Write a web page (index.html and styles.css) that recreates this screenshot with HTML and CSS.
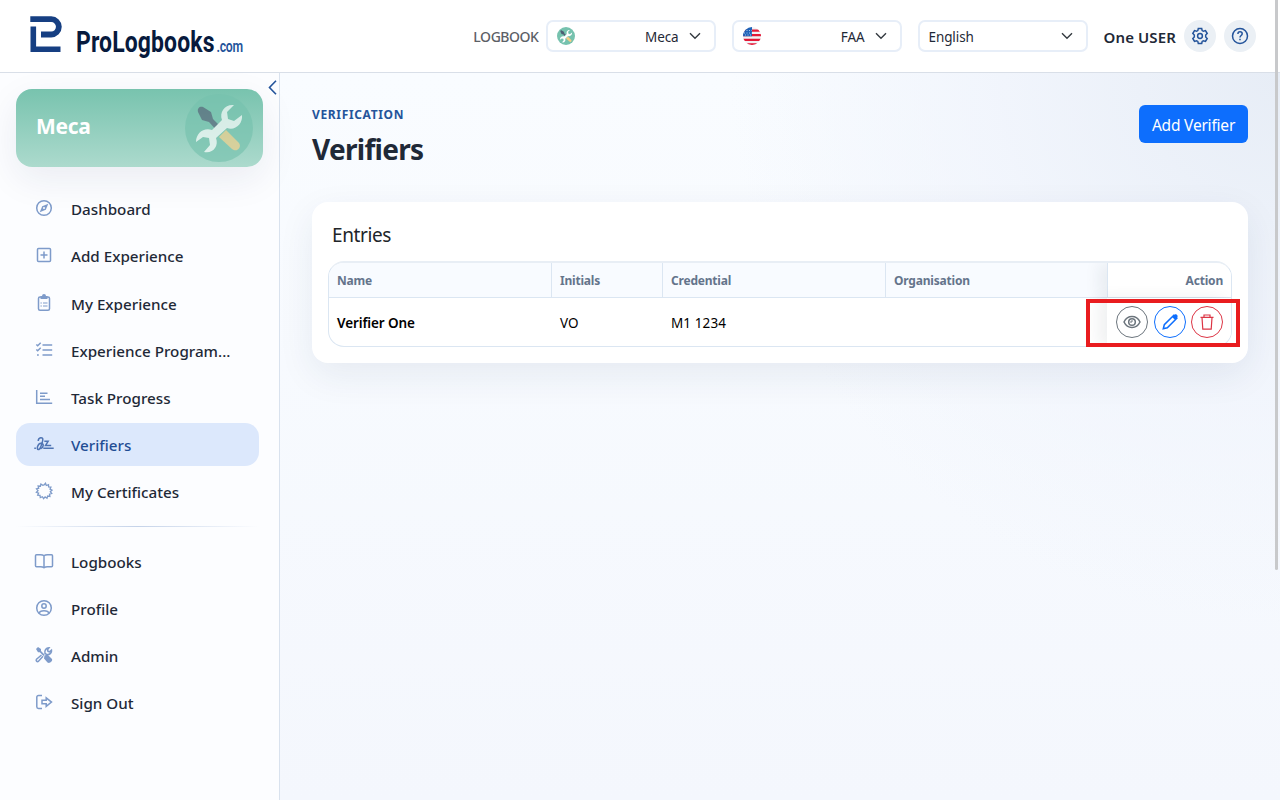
FILE: index.html
```html
<!DOCTYPE html>
<html lang="en">
<head>
  <meta charset="UTF-8" />
  <meta name="viewport" content="width=device-width, initial-scale=1.0" />
  <title>Verifiers - ProLogbooks.com</title>
  <link rel="stylesheet" href="styles.css">
</head>
<body>
  <svg width="0" height="0" class="defs">
    <symbol id="chevron" viewBox="0 0 12 8"><path d="M1 1.2 6 6.2 11 1.2" /></symbol>
    <symbol id="tools-color" viewBox="0 0 68 68">
      <circle cx="34" cy="34" r="34" fill="#76c2ae" />
      <path d="M13 18c-1-4 2-6 5-5l8 5 2 7 9 9-4 4-9-10-7-2z" fill="#4f5d73" />
      <path d="m34 43 7-7 13 13c3 4-2 10-7 6z" fill="#f5cf87" />
      <path d="M49 11c-9-1-15 7-12 15L27 36c-8-3-16 3-16 12l7-5 6 1 1 7-6 7c9 2 15-6 12-14l11-10c8 3 16-4 15-13l-8 6-6-2-1-7z" fill="#fff" />
    </symbol>
  </svg>

  <header class="topbar">
    <svg class="logo" width="216" height="46" viewBox="0 0 216 46">
      <path d="M0.3 4.2H21.2a7.6 7.6 0 0 1 0 15.3H11" fill="none" stroke="#163f82" stroke-width="5.8" />
      <path d="M3.3 11.500V34.300H30.5" fill="none" stroke="#163f82" stroke-width="5.6" />
      <text class="logo-name" transform="translate(46 36.500) scale(.765 1)" textLength="181">ProLogbooks</text>
      <text class="logo-com" transform="translate(186.500 36.500) scale(.72 1)" textLength="37">.com</text>
    </svg>
    <div class="controls">
      <span class="control-label">LOGBOOK</span>
      <div class="select">
        <svg class="select-icon" width="18" height="18"><use href="#tools-color" /></svg>
        <span class="select-value right">Meca</span>
        <svg class="chevron" width="12" height="8"><use href="#chevron" /></svg>
      </div>
      <div class="select">
        <svg class="select-icon" width="18" height="18" viewBox="0 0 18 18">
          <clipPath id="flag"><circle cx="9" cy="9" r="9" /></clipPath>
          <g clip-path="url(#flag)">
            <path fill="#f1f2f5" d="M0 0h18v18H0z" />
            <path fill="#e31837" d="M0 2.5h18v2.3H0zM0 7h18v2.3H0zM0 11.7h18V14H0zM0 16.3h18V18H0z" />
            <path fill="#1f62b8" d="M0 0h9v9.3H0z" />
            <path stroke="#a9c7ea" stroke-dasharray="1 1.5" d="M1 3.5h8M1 6h8M2 8h7" />
          </g>
        </svg>
        <span class="select-value right">FAA</span>
        <svg class="chevron" width="12" height="8"><use href="#chevron" /></svg>
      </div>
      <div class="select">
        <span class="select-value">English</span>
        <svg class="chevron" width="12" height="8"><use href="#chevron" /></svg>
      </div>
      <span class="user">One USER</span>
      <span class="round">
        <svg class="icon" width="18" height="18" viewBox="0 0 18 18"><path d="M7.3 1.5h3.4l.5 2.1 1.2.7 2.1-.7 1.7 2.9L14.7 8v2l1.5 1.5-1.7 2.9-2.1-.7-1.2.7-.5 2.1H7.3l-.5-2.1-1.2-.7-2.1.7-1.7-2.9L3.3 10V8L1.8 6.5l1.7-2.9 2.1.7 1.2-.7z" /><circle cx="9" cy="9" r="2.4" /></svg>
      </span>
      <span class="round">
        <svg class="icon" width="18" height="18" viewBox="0 0 18 18"><circle cx="9" cy="9" r="7.5" /><path d="M6.9 7c0-3 4.3-2.8 4.3-.2C11.2 8.500 9 8.500 9 10.400M9 11.700v1.500" /></svg>
      </span>
    </div>
  </header>

  <div class="layout">
    <aside class="sidebar">
      <svg class="collapse" width="9" height="15" viewBox="0 0 9 15"><path d="M8 .8 1.500 7.500 8 14.200" /></svg>
      <div class="logbook-card">
        <span>Meca</span>
        <svg width="68" height="68"><use href="#tools-color" /></svg>
      </div>
      <nav class="menu">
        <a class="item"><svg class="icon" width="20" height="20" viewBox="0 0 20 20"><circle cx="10" cy="10" r="7.300" /><path class="solid" d="M14.300 5.700 11.800 11.800 5.700 14.300 8.200 8.200z" /><circle class="hole" cx="10" cy="10" r="1" /></svg>Dashboard</a>
        <a class="item"><svg class="icon" width="20" height="20" viewBox="0 0 20 20"><rect x="3.500" y="3.500" width="13" height="13" rx="1" /><path d="M10 6.500v7M6.500 10h7" /></svg>Add Experience</a>
        <a class="item"><svg class="icon" width="20" height="20" viewBox="0 0 20 20"><rect x="4.500" y="4" width="11" height="13.300" rx="1.500" /><path class="solid" d="M6.500 3H8a2 2 0 0 1 4 0h1.500v3h-7z" /><path d="M6.500 10h1.300M9 10h4.500M6.500 13h1.300M9 13h4.500" stroke-width="1.200" /></svg>My Experience</a>
        <a class="item"><svg class="icon" width="20" height="20" viewBox="0 0 20 20"><path d="M8.500 5h9.700M8.500 10h9.700M8.500 15h9.700M3 15h1.800M2.300 4.500l1.400 1.300 3-3M2.300 9.500l1.400 1.300 3-3" /></svg>Experience Program...</a>
        <a class="item"><svg class="icon" width="20" height="20" viewBox="0 0 20 20"><path d="M2.700 3v13.300h15.500M6 6.200h7.500M6 9.300h5M6 12.500h10" /></svg>Task Progress</a>
        <a class="item active"><svg class="icon" width="20" height="20" viewBox="0 0 20 20"><path d="M.3 14.300h1.600M4.200 7C4.300 3 9.300 2.500 8.800 6 8.300 9.500 6 15.800 4.300 15.600 2.300 15.300 3.500 9.700 7 9.300c3.500-.3 2.500 4.500-.5 5.500M9.300 14.300h10.400M10.300 7.300h3.800l-2.600 4.200h5.700" /></svg>Verifiers</a>
        <a class="item"><svg class="icon" width="20" height="20" viewBox="0 0 20 20"><path d="M10 4 11.500 2.300 12.300 4.500 14.500 3.700 14.600 6 16.900 6.100 16 8.200 18 9.200 16.300 10.700 17.700 12.500 15.500 13.100 15.900 15.400 13.700 15 13 17.200 11.100 15.900 9.600 17.600 8.400 15.700 6.300 16.600 6 14.300 3.700 14.200 4.600 12.100 2.400 11.300 4 9.700 2.500 7.900 4.700 7.200 4.100 5 6.400 5.200 6.900 3 8.800 4.300z" stroke-width="1.300" /></svg>My Certificates</a>
      </nav>
      <div class="divider"></div>
      <nav class="menu">
        <a class="item"><svg class="icon" width="20" height="20" viewBox="0 0 20 20"><path d="M10 4.800C9 3.800 7.500 3.700 6.500 3.700h-4c-.7 0-1 .3-1 1v10c0 .7.300 1 1 1h4c1.500 0 2.500.2 3.500 1 1-.8 2-1 3.500-1h4c.7 0 1-.3 1-1v-10c0-.7-.3-1-1-1h-4c-1 0-2.500.1-3.500 1.100zv12" /></svg>Logbooks</a>
        <a class="item"><svg class="icon" width="20" height="20" viewBox="0 0 20 20"><circle cx="10" cy="10" r="7.300" /><circle cx="10" cy="8" r="2.200" /><path d="M5 15.200c1-3.400 9-3.400 10 0" /></svg>Profile</a>
        <a class="item"><svg class="icon" width="20" height="20" viewBox="0 0 20 20"><path class="solid" d="M2 4 4 2l3 2v2l3.700 3.700-1.200 1.200L5.800 7.200H4zM10.500 10.500l3-1 4.500 4.500c1 2-2.300 5-4.500 3.500L10 13.500z" /><path d="m9 11.300-4.500 5c-1.500 1-3-.8-2-2l5-4.300M11 8.500c-.7-3.200 1-5.700 4-5.700l-1.500 2 .5 1.500 1.500.5 2-1.600c.5 2.500-1.500 4.500-4.500 4.500z" /></svg>Admin</a>
        <a class="item"><svg class="icon" width="20" height="20" viewBox="0 0 20 20"><path d="M8 3.500H4.500c-1 0-1.700.7-1.700 1.700v9.600c0 1 .7 1.700 1.700 1.700H8M8 8.300h4.200V5.800l5.300 4.300-5.300 4.300v-2.600H8z" /></svg>Sign Out</a>
      </nav>
    </aside>

    <main class="content">
      <div class="page-head">
        <div>
          <div class="eyebrow">VERIFICATION</div>
          <h1>Verifiers</h1>
        </div>
        <button type="button">Add Verifier</button>
      </div>

      <section class="card">
        <h2>Entries</h2>
        <div class="table">
          <div class="tr th">
            <span>Name</span>
            <span>Initials</span>
            <span>Credential</span>
            <span>Organisation</span>
            <span class="sticky">Action</span>
          </div>
          <div class="tr td">
            <span class="name">Verifier One</span>
            <span>VO</span>
            <span>M1 1234</span>
            <span></span>
            <span class="sticky">
              <a class="action view"><svg class="icon" width="18" height="18" viewBox="0 0 18 18"><path d="M1 9c3.500-7.300 12.500-7.300 16 0-3.500 7.300-12.500 7.300-16 0z" /><circle cx="9" cy="9" r="3.300" /><path d="M9 7V9H7" stroke-width="1" /></svg></a>
              <a class="action edit"><svg class="icon" width="18" height="18" viewBox="0 0 18 18"><path d="m2.300 15.700 1-4L12.800 2.200l3 3-9.500 9.500z" /><path class="solid" d="m11 4 2.400-2.300c2-1.300 4 .9 2.900 2.700L14 6.800z" /></svg></a>
              <a class="action delete"><svg class="icon" width="18" height="18" viewBox="0 0 18 18"><path d="M2.500 4.300h13M6 4V2h6v2M4 4.500l.8 11.700h8.400L14 4.500" /></svg></a>
            </span>
          </div>
        </div>
        <div class="highlight"></div>
      </section>
    </main>
  </div>
  <div class="scroll-thumb"></div>
</body>
</html>
```
FILE: styles.css
```css
* {
  box-sizing: border-box;
}
body {
  margin: 0;
  height: 800px;
  overflow: hidden;
  font-family: "Noto Sans", "Open Sans", sans-serif;
  font-size: 16px;
  color: #1f2937;
  background: #fff;
}
.defs {
  position: absolute;
}
.topbar {
  height: 73px;
  border-bottom: 1px solid #d9dfe8;
  display: flex;
  justify-content: space-between;
  padding: 0 24px 0 30px;
}
.logo {
  margin-top: 15px;
  overflow: visible;
}
.logo-name, .logo-com {
  font-family: Roboto, sans-serif;
  font-weight: bold;
  font-size: 30px;
  fill: #071a3d;
}
.logo-com {
  font-size: 17px;
  font-weight: 600;
  fill: #24549b;
}
.controls {
  display: flex;
  align-items: center;
  height: 72px;
}
.control-label {
  font-size: 14px;
  font-weight: 500;
  color: #5c6066;
  letter-spacing: -0.45px;
  padding-top: 1px;
  margin-right: 7px;
}
.select {
  width: 170px;
  height: 32px;
  border: 2px solid #e7eef8;
  border-radius: 7px;
  display: flex;
  align-items: center;
  padding: 0 13px 0 9px;
  margin-right: 16px;
}
.select-value {
  flex: 1;
  font-size: 13.5px;
  letter-spacing: -0.1px;
  padding-top: 1px;
}
.right {
  text-align: right;
}
.chevron {
  margin-left: 10px;
  fill: none;
  stroke: #343a40;
  stroke-width: 1.4;
}
.user {
  font-size: 15px;
  font-weight: 600;
  letter-spacing: 0.12px;
  margin-right: 8px;
  padding-top: 2px;
}
.round {
  width: 32px;
  height: 32px;
  border-radius: 50%;
  background: #ebf0f5;
  color: #24549b;
  display: flex;
  align-items: center;
  justify-content: center;
}
.round + .round {
  margin-left: 8px;
}
.icon {
  fill: none;
  stroke: currentColor;
  stroke-width: 1.5;
  flex: none;
}
.icon .solid {
  fill: currentColor;
  stroke: none;
}
.icon .hole {
  fill: #fff;
  stroke: none;
}
.layout {
  display: flex;
  height: 727px;
}
.sidebar {
  position: relative;
  width: 280px;
  border-right: 1px solid #d9e2ee;
  background: #fcfdff;
  padding: 16px;
}
.collapse {
  position: absolute;
  top: 7px;
  right: 2px;
  fill: none;
  stroke: #24549b;
  stroke-width: 1.6;
}
.logbook-card {
  height: 78px;
  border-radius: 16px;
  background: linear-gradient(#78c3ae, #acdacd);
  box-shadow: 0 12px 36px rgba(31, 41, 85, 0.08);
  display: flex;
  align-items: center;
  justify-content: space-between;
  padding: 0 10px 0 20px;
  color: #fff;
  font-size: 21px;
  font-weight: bold;
  letter-spacing: -0.3px;
}
.logbook-card span {
  padding-bottom: 4px;
}
.logbook-card svg {
  opacity: 0.65;
}
.menu {
  display: flex;
  flex-direction: column;
  gap: 4px;
  margin: 20px 4px 0 0;
}
.item {
  display: flex;
  align-items: center;
  gap: 17px;
  height: 43.2px;
  padding: 1.4px 0 0 18px;
  border-radius: 14px;
  font-size: 15.2px;
  font-weight: 550;
  letter-spacing: 0;
  white-space: nowrap;
}
.item .icon {
  color: #7e9bca;
  margin-top: -2px;
}
.item.active {
  background: #dce8fc;
  color: #1f4d94;
}
.item.active .icon {
  color: #4f74b3;
}
.divider {
  height: 1px;
  margin: 13px 4px -8px 0;
  background: linear-gradient(90deg, transparent, #c5d3e9, transparent);
}
.content {
  flex: 1;
  padding: 32px;
  background: radial-gradient(circle at 100% 0, #e7edf6 0, rgba(240, 244, 252, 0.8) 300px, transparent 550px), linear-gradient(#f9fcff, #f4f7fd);
}
.page-head {
  display: flex;
  justify-content: space-between;
  align-items: flex-start;
  height: 97px;
}
.eyebrow {
  font-size: 12px;
  line-height: 20px;
  font-weight: bold;
  letter-spacing: 0.65px;
  color: #24549b;
}
h1 {
  margin: 4px 0 0;
  font-size: 28px;
  line-height: 40px;
  letter-spacing: -0.7px;
}
button {
  height: 38px;
  width: 109px;
  padding: 2px 0 0;
  border: none;
  border-radius: 6px;
  background: #0d6efd;
  color: #fff;
  font-family: inherit;
  font-size: 15.5px;
  letter-spacing: -0.2px;
}
.card {
  position: relative;
  height: 161px;
  padding: 20px 16px 16px;
  border-radius: 16px;
  background: #fff;
  box-shadow: 0 12px 36px rgba(31, 50, 85, 0.08);
}
h2 {
  margin: 0 4px 13px;
  font-size: 19px;
  line-height: 26px;
  font-weight: normal;
  letter-spacing: -0.4px;
  color: #212529;
}
.table {
  height: 86px;
  border: 1px solid #dbe6f2;
  border-top: 2px solid #e8eef5;
  border-radius: 16px;
  overflow: hidden;
}
.tr {
  display: grid;
  grid-template-columns: 222px 111px 223px 222px 1fr;
}
.tr > span {
  display: flex;
  align-items: center;
  padding: 1px 8px 0;
}
.th {
  height: 35px;
  background: #f8fbff;
  border-bottom: 1px solid #dbe6f2;
  font-size: 12px;
  font-weight: bold;
  letter-spacing: -0.2px;
  color: #64748b;
}
.th > span:not(:first-child) {
  border-left: 1px solid #dbe6f2;
}
.td {
  height: 49px;
  font-size: 13.5px;
  color: #000;
}
.td > span:not(:first-child) {
  padding-left: 9px;
  letter-spacing: 0.1px;
}
.name {
  font-weight: 600;
  letter-spacing: -0.1px;
}
.tr > .sticky {
  justify-content: flex-end;
  background: #fff;
  box-shadow: -8px 0 16px rgba(31, 41, 55, 0.07);
}
.td > .sticky {
  gap: 5.5px;
  padding: 0 8px 1px;
}
.action {
  width: 32px;
  height: 32px;
  border: 1px solid;
  border-radius: 50%;
  display: flex;
  align-items: center;
  justify-content: center;
  flex: none;
}
.view {
  color: #6c757d;
}
.edit {
  color: #0d6efd;
}
.delete {
  color: #dc3545;
}
.delete .icon {
  stroke-width: 1.2;
}
/* marks the row actions */
.highlight {
  position: absolute;
  left: 774px;
  top: 97px;
  width: 154px;
  height: 48px;
  border: 4px solid #e91c1f;
}
.scroll-thumb {
  position: absolute;
  top: 0;
  right: 2px;
  width: 3px;
  height: 570px;
  border-radius: 0 0 2px 2px;
  background: #c8c9cb;
}
```
